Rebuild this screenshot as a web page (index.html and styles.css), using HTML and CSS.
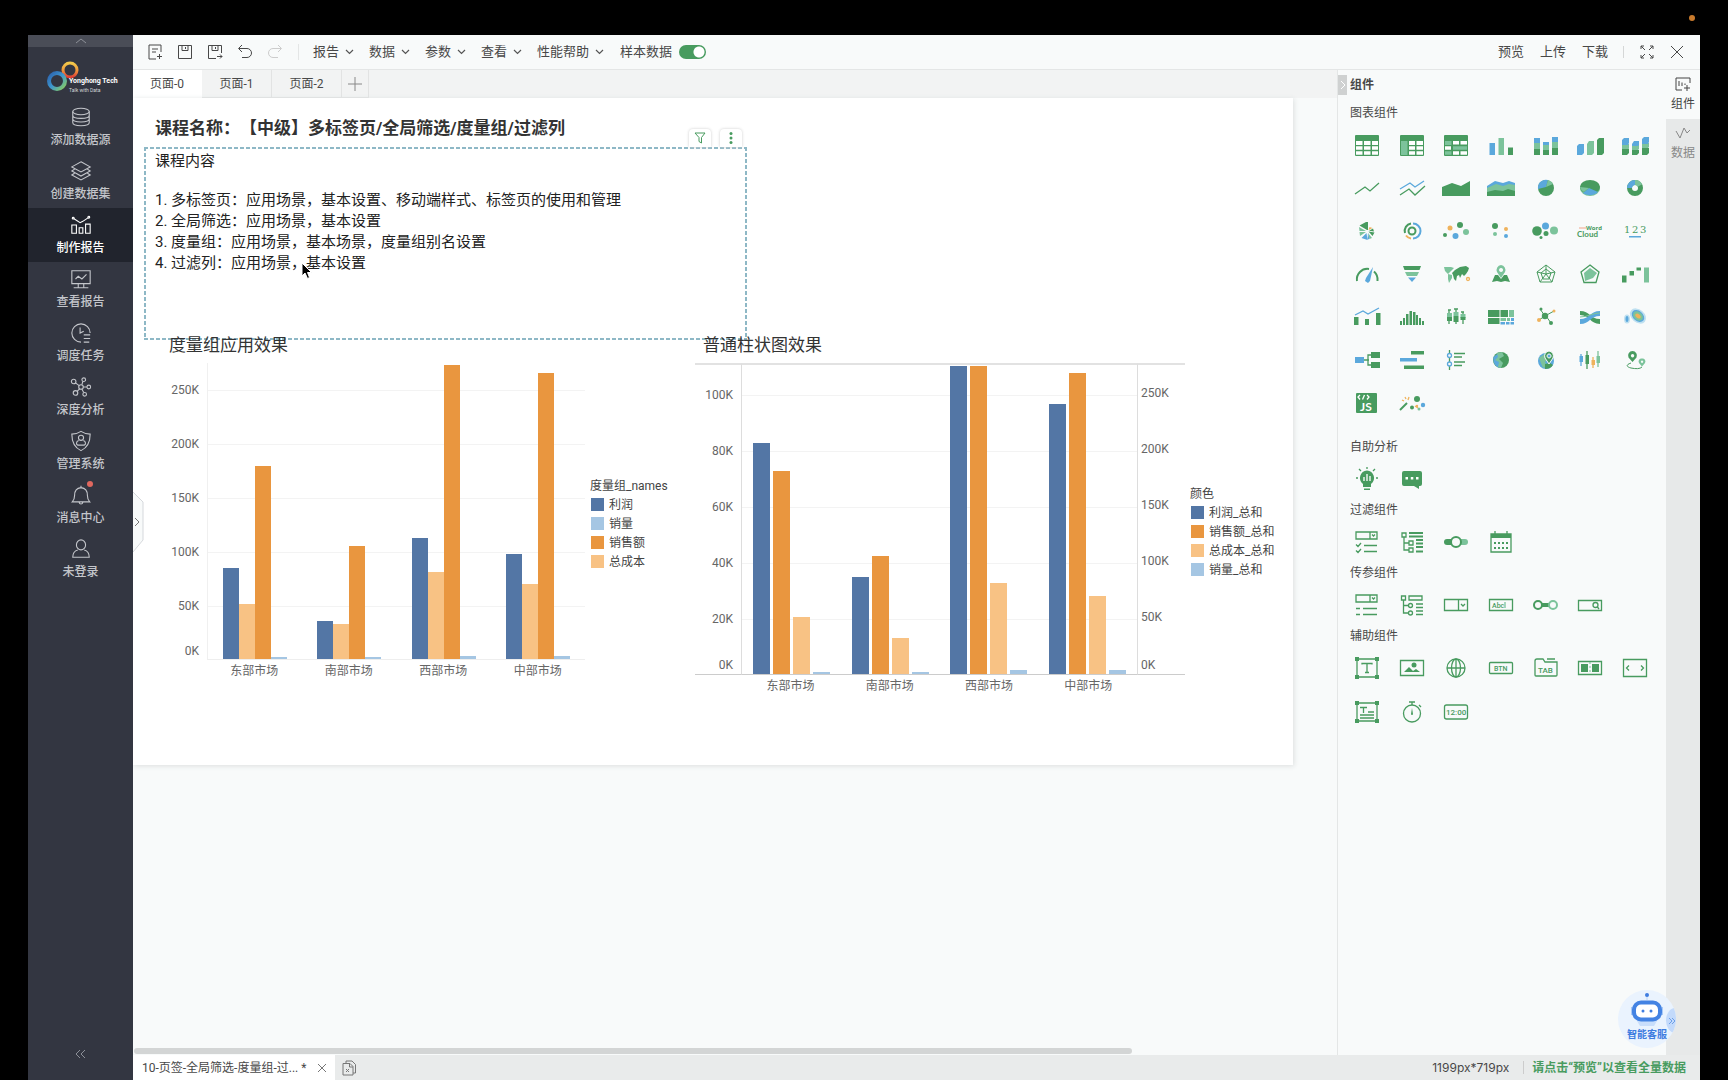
FILE: index.html
```html
<!DOCTYPE html>
<html lang="zh-CN">
<head>
<meta charset="utf-8">
<meta name="viewport" content="width=device-width, initial-scale=1">
<title>制作报告</title>
<link rel="stylesheet" href="styles.css">
</head>
<body>
<span class="status-dot"></span>
<div class="app">
  <nav class="sidebar">
    <button class="side-collapse" aria-label="收起顶部"><svg width="12" height="6" viewBox="0 0 12 6"><path d="M1 5l5-4 5 4"/></svg></button>
    <a class="logo" href="#">
      <svg width="32" height="32" viewBox="0 0 32 32">
        <defs>
          <linearGradient id="lw" x1="0" y1="0" x2="0" y2="1"><stop offset="0" stop-color="#f3c94b"/><stop offset=".5" stop-color="#ee9a3c"/><stop offset="1" stop-color="#df3f35"/></linearGradient>
          <linearGradient id="lc" x1="0" y1="0" x2="1" y2="1"><stop offset="0" stop-color="#2c62ad"/><stop offset=".5" stop-color="#3d97cf"/><stop offset="1" stop-color="#8ccf5c"/></linearGradient>
        </defs>
        <circle cx="23" cy="9" r="7" fill="none" stroke="url(#lw)" stroke-width="3"/>
        <circle cx="10" cy="20" r="8" fill="none" stroke="url(#lc)" stroke-width="4"/>
      </svg>
      <span class="logo-text"><b>Yonghong Tech</b><small>Talk with Data</small></span>
    </a>
    <ul class="side-list">
      <li><a href="#"><svg class="si" viewBox="0 0 24 24"><ellipse cx="12" cy="6" rx="9" ry="3.5"/><path d="M3 6v12c0 2 4 3.500 9 3.500s9-1.500 9-3.500V6M3 10c0 2 4 3.500 9 3.500s9-1.500 9-3.500M3 14c0 2 4 3.500 9 3.500s9-1.500 9-3.500"/></svg><span>添加数据源</span></a></li>
      <li><a href="#"><svg class="si" viewBox="0 0 24 24"><path d="M12 2l10 5.500-10 5.500L2 7.500zM5 10l-3 2 10 5.500 10-5.500-3-2M5 14.500l-3 1.800 10 5.500 10-5.500-3-1.800"/></svg><span>创建数据集</span></a></li>
      <li><a href="#" class="active" aria-current="page"><svg class="si" viewBox="0 0 24 24"><path d="M2 12h5v9H2zM10 15h4v6h-4zM17 11h5v10h-5zM4 5l7 4.500 3-1.500 6-4"/><circle cx="3.500" cy="4.500" r="1"/><circle cx="20.500" cy="3.500" r="1"/></svg><span>制作报告</span></a></li>
      <li><a href="#"><svg class="si" viewBox="0 0 24 24"><path d="M2 3h20v14H2zM9 17v4M15 17v4M4 21.500h16M6 12l3-3 4 3 5-5"/></svg><span>查看报告</span></a></li>
      <li><a href="#"><svg class="si" viewBox="0 0 24 24"><path d="M12 22a10 10 0 1 1 10-10M11 6v6l4-2M15 14h7M15 18h7M15 22h6"/></svg><span>调度任务</span></a></li>
      <li><a href="#"><svg class="si" viewBox="0 0 24 24"><circle cx="12" cy="12" r="2.500"/><circle cx="4" cy="6" r="2.500"/><circle cx="15" cy="4" r="2"/><circle cx="20.500" cy="12" r="2"/><circle cx="6" cy="18.500" r="2.500"/><circle cx="16" cy="20" r="2"/><path d="M6 7.500l4 3M14 6l-1 3.500M14.500 12h4M10.500 14L8 16.500M13 14.500l2 3.500"/></svg><span>深度分析</span></a></li>
      <li><a href="#"><svg class="si" viewBox="0 0 24 24"><path d="M12 1.500c3 2 6 3 10 3 0 8-2 14-10 18C4 18.500 2 12.500 2 4.500c4 0 7-1 10-3z"/><circle cx="12" cy="8.500" r="2.800"/><path d="M9.500 11.500c-3 1-3 4.500-1 5h7c2-.5 2-4-1-5"/></svg><span>管理系统</span></a></li>
      <li><a href="#"><svg class="si" viewBox="0 0 24 24"><path d="M2.500 19.500h19c-2-2-2.500-4-2.500-7 0-5-2-8-7-8.500-5 .5-7 3.500-7 8.500 0 3-.5 5-2.500 7zM12 4V2M10 20c.5 2.500 3.500 2.500 4 0"/></svg><i class="badge"></i><span>消息中心</span></a></li>
      <li><a href="#"><svg class="si" viewBox="0 0 24 24"><ellipse cx="12" cy="7.500" rx="5" ry="5.500"/><path d="M8.500 13C4.500 14 3 17 3 21h18c0-4-1.500-7-5.500-8"/></svg><span>未登录</span></a></li>
    </ul>
    <button class="side-fold" aria-label="折叠"><svg width="12" height="10" viewBox="0 0 12 10"><path d="M5 1L1 5l4 4M10 1L6 5l4 4"/></svg></button>
  </nav>

  <div class="main">
    <header class="toolbar">
      <div class="tools">
        <button aria-label="新建"><svg class="ti" viewBox="0 0 16 16"><path d="M14 8V1H2v14h7M5 5h6M5 8h4M10 12.500h5M12.500 10v5"/></svg></button>
        <button aria-label="保存"><svg class="ti" viewBox="0 0 16 16"><path d="M1.500 1.500h13v13h-13zM5 1.500v5h6v-5M8.500 3v2"/></svg></button>
        <button aria-label="另存为"><svg class="ti" viewBox="0 0 16 16"><path d="M14.500 9V1.500h-13v13H9M5 1.500v5h6v-5M8.500 3v2M10 12.500h5M13 10.500l2 2-2 2"/></svg></button>
        <button aria-label="撤销"><svg class="ti" viewBox="0 0 16 16"><path d="M5 1L1.500 4.500 5 8M2 4.500h8a4.500 4.500 0 0 1 0 9H5"/></svg></button>
        <button aria-label="重做" disabled><svg class="ti" viewBox="0 0 16 16"><path d="M11 1l3.500 3.500L11 8M14 4.500H6a4.500 4.500 0 0 0 0 9h5"/></svg></button>
      </div>
      <div class="menus">
        <button>报告<svg class="caret" viewBox="0 0 9 6"><path d="M1 1l3.500 3.500L8 1"/></svg></button>
        <button>数据<svg class="caret" viewBox="0 0 9 6"><path d="M1 1l3.500 3.500L8 1"/></svg></button>
        <button>参数<svg class="caret" viewBox="0 0 9 6"><path d="M1 1l3.500 3.500L8 1"/></svg></button>
        <button>查看<svg class="caret" viewBox="0 0 9 6"><path d="M1 1l3.500 3.500L8 1"/></svg></button>
        <button>性能帮助<svg class="caret" viewBox="0 0 9 6"><path d="M1 1l3.500 3.500L8 1"/></svg></button>
        <label class="switch">样本数据<input type="checkbox" checked></label>
      </div>
      <div class="actions">
        <button>预览</button><button>上传</button><button>下载</button>
        <i class="sep"></i>
        <button aria-label="全屏"><svg class="ti" viewBox="0 0 16 16"><path d="M2 5V2h3M2 2l4 4M11 2h3v3M14 2l-4 4M2 11v3h3M2 14l4-4M14 11v3h-3M14 14l-4-4"/></svg></button>
        <button aria-label="关闭"><svg class="ti" viewBox="0 0 16 16"><path d="M2 2l12 12M14 2L2 14"/></svg></button>
      </div>
    </header>

    <div class="work">
      <section class="editor">
        <div class="tabs">
          <button class="on">页面-0</button><button>页面-1</button><button>页面-2</button>
          <button class="add" aria-label="添加页面"><svg width="14" height="14" viewBox="0 0 14 14"><path d="M7 0v14M0 7h14"/></svg></button>
        </div>
        <div class="stage">
          <button class="handle" aria-label="展开"><svg width="11" height="62" viewBox="0 0 11 62"><path class="hb" d="M0 1l10 10v38L0 61"/><path class="ha" d="M2 27l4 4-4 4"/></svg></button>
          <div class="artboard">
            <h1>课程名称：【中级】多标签页/全局筛选/度量组/过滤列</h1>
            <article class="note">
              <div class="note-tools">
                <button aria-label="筛选"><svg width="12" height="12" viewBox="0 0 12 12"><path d="M1 1h10L7.500 5.500V11L5 9.500v-4z"/></svg></button>
                <button aria-label="更多"><svg width="4" height="12" viewBox="0 0 4 12"><circle cx="2" cy="1.500" r="1.500"/><circle cx="2" cy="6" r="1.500"/><circle cx="2" cy="10.500" r="1.500"/></svg></button>
              </div>
              <p>课程内容</p>
              <p>1. 多标签页：应用场景，基本设置、移动端样式、标签页的使用和管理<br>2. 全局筛选：应用场景，基本设置<br>3. 度量组：应用场景，基本场景，度量组别名设置<br>4. 过滤列：应用场景，基本设置</p>
              <svg class="cursor" width="12" height="18" viewBox="0 0 12 18"><path d="M1 1v13l3-3 2.500 5.500 2-1L6.500 10.500H10.500z"/></svg>
            </article>
            <div class="charts">
              <section class="chart first">
                <h2>度量组应用效果</h2>
                <div class="chart-body">
                  <div class="axis left"><span>250K</span><span>200K</span><span>150K</span><span>100K</span><span>50K</span><span>0K</span></div>
                  <div class="plot">
                    <div class="group"><i class="c1" style="height:91px"></i><i class="c3" style="height:55px"></i><i class="c2" style="height:193px"></i><i class="c4" style="height:2px"></i></div>
                    <div class="group"><i class="c1" style="height:38px"></i><i class="c3" style="height:35px"></i><i class="c2" style="height:113px"></i><i class="c4" style="height:2px"></i></div>
                    <div class="group"><i class="c1" style="height:121px"></i><i class="c3" style="height:87px"></i><i class="c2" style="height:294px"></i><i class="c4" style="height:3px"></i></div>
                    <div class="group"><i class="c1" style="height:105px"></i><i class="c3" style="height:75px"></i><i class="c2" style="height:286px"></i><i class="c4" style="height:3px"></i></div>
                  </div>
                  <div class="cats"><span>东部市场</span><span>南部市场</span><span>西部市场</span><span>中部市场</span></div>
                  <div class="legend"><b>度量组_names</b><ul><li><i class="c1"></i>利润</li><li><i class="c4"></i>销量</li><li><i class="c2"></i>销售额</li><li><i class="c3"></i>总成本</li></ul></div>
                </div>
              </section>
              <section class="chart second">
                <h2>普通柱状图效果</h2>
                <div class="chart-body">
                  <div class="axis left"><span>100K</span><span>80K</span><span>60K</span><span>40K</span><span>20K</span><span>0K</span></div>
                  <div class="plot">
                    <div class="group"><i class="c1" style="height:231px"></i><i class="c2" style="height:203px"></i><i class="c3" style="height:57px"></i><i class="c4" style="height:2px"></i></div>
                    <div class="group"><i class="c1" style="height:97px"></i><i class="c2" style="height:118px"></i><i class="c3" style="height:36px"></i><i class="c4" style="height:2px"></i></div>
                    <div class="group"><i class="c1" style="height:308px"></i><i class="c2" style="height:308px"></i><i class="c3" style="height:91px"></i><i class="c4" style="height:4px"></i></div>
                    <div class="group"><i class="c1" style="height:270px"></i><i class="c2" style="height:301px"></i><i class="c3" style="height:78px"></i><i class="c4" style="height:4px"></i></div>
                  </div>
                  <div class="axis right"><span>250K</span><span>200K</span><span>150K</span><span>100K</span><span>50K</span><span>0K</span></div>
                  <div class="cats"><span>东部市场</span><span>南部市场</span><span>西部市场</span><span>中部市场</span></div>
                  <div class="legend"><b>颜色</b><ul><li><i class="c1"></i>利润_总和</li><li><i class="c2"></i>销售额_总和</li><li><i class="c3"></i>总成本_总和</li><li><i class="c4"></i>销量_总和</li></ul></div>
                </div>
              </section>
            </div>
          </div>
          <div class="scroll"><i></i></div>
        </div>
      </section>

      <aside class="panel">
        <div class="panel-head"><button aria-label="收起面板"><svg width="6" height="10" viewBox="0 0 6 10"><path d="M1 1l4 4-4 4"/></svg></button><h2>组件</h2></div>
        <h3>图表组件</h3>
        <div class="icons charts-set">
          <button title="普通表"><svg viewBox="0 0 30 24"><rect class="g" x="3" y="2" width="24" height="21" rx="1"/><path class="w" d="M4 8h6.500v4H4zM12 8h6.500v4H12zM20 8h6v4h-6zM4 13.300h6.500v3.500H4zM12 13.300h6.500v3.500H12zM20 13.300h6v3.500h-6zM4 18.200h6.500v3.500H4zM12 18.200h6.500v3.500H12zM20 18.200h6v3.500h-6z"/></svg></button>
          <button title="交叉表"><svg viewBox="0 0 30 24"><rect class="g" x="3" y="2" width="24" height="21" rx="1"/><path class="m" d="M4 8h6.500v14H4z"/><path class="w" d="M12 8h6v4h-6zM19.500 8h6.500v4h-6.500zM12 13.300h6v3.500h-6zM19.500 13.300h6.500v3.500h-6.500zM12 18.200h6v3.500h-6zM19.500 18.200h6.500v3.500h-6.500z"/></svg></button>
          <button title="自由表"><svg viewBox="0 0 30 24"><rect class="g" x="3" y="2" width="24" height="21" rx="1"/><path class="m" d="M4 8h6.500v4H4zM12 13.300h14v3.500H12zM4 18.200h6.500v3.500H4z"/><path class="w" d="M12 8h6v3.500h-6zM19.500 8h6.500v3.500h-6.500zM4 13.300h6v3.500H4zM12 18.200h6v3.500h-6zM19.500 18.200h6.500v3.500h-6.500z"/></svg></button>
          <button title="柱状图"><svg viewBox="0 0 30 24"><path class="b" d="M3.500 10H9v12H3.500z"/><path class="m" d="M12.500 5H18v17h-5.500z"/><path class="g" d="M22 14.500h5V22h-5z"/></svg></button>
          <button title="堆积柱状图"><svg viewBox="0 0 30 24"><path class="g" d="M3 16h6v6H3zM12 17h6v5h-6zM21 15h6v7h-6z"/><path class="m" d="M3 10h6v6H3zM12 12h6v5h-6zM21 9h6v6h-6z"/><path class="b" d="M3 5h6v5H3zM12 9h6v3h-6zM21 4h6v5h-6z"/></svg></button>
          <button title="3D柱状图"><svg viewBox="0 0 30 24"><path class="b" d="M2 13l2-2h5v9l-2 2H2z"/><path class="m" d="M12 11l2-3h5v12l-2 2h-5z"/><path class="g" d="M22 7l2-2h5v15l-2 2h-5z"/></svg></button>
          <button title="3D堆积柱状图"><svg viewBox="0 0 30 24"><path class="g" d="M2 16h6l1-1v5l-2 2H2zM12 17h7v3l-2 2h-5zM22 15h7v5l-2 2h-5z"/><path class="m" d="M2 11h7v4l-1 1H2zM12 12h7v4l-1 1h-6zM22 10h7v4l-1 1h-6z"/><path class="b" d="M2 7l2-2h5v5l-1 2H2zM12 11l2-3h5v4l-1 1h-6zM22 6l2-2h5v5l-1 2h-6z"/></svg></button>

          <button title="线图"><svg viewBox="0 0 30 24"><path class="sg" d="M3 18l10-7 5 4 9-8"/></svg></button>
          <button title="多线图"><svg viewBox="0 0 30 24"><path class="sb" d="M3 13l10-6 5 4 9-6"/><path class="sg" d="M3 19l9-6 6 6 10-9"/></svg></button>
          <button title="面积图"><svg viewBox="0 0 30 24"><path class="g" d="M1 11l10-4 9 3 9-5v15H1z"/></svg></button>
          <button title="堆积面积图"><svg viewBox="0 0 30 24"><path class="b" d="M1 10l8-5 8 2 6-2 6 2v10H1z"/><path class="m" d="M1 12l9-4 7 2 6-2 6 1v10H1z"/><path class="g" d="M1 16l8-2 8 1 5-2 7 2v5H1z"/></svg></button>
          <button title="饼图"><svg viewBox="0 0 30 24"><circle class="g" cx="15" cy="12" r="8"/><path class="b" d="M7 13a8 8 0 0 1 10-9l-2 7z"/><path class="m" d="M17 4a8 8 0 0 1 5 4l-7 3z"/></svg></button>
          <button title="3D饼图"><svg viewBox="0 0 30 24"><ellipse class="m" cx="15" cy="12.500" rx="10" ry="7.500"/><ellipse class="g" cx="15" cy="11" rx="10" ry="7"/><path class="b" d="M8 17l6-5 9 4c-4 4-11 4-15 1z"/><path class="m" d="M5 11c1 3 2 4 4 5l5-4z"/></svg></button>
          <button title="环形图"><svg viewBox="0 0 30 24"><circle class="sg thick" cx="15" cy="12" r="5.500"/><path class="sb thick" d="M9.500 12a5.500 5.500 0 0 1 5.500-5.500"/><path class="sm thick" d="M15 6.500a5.500 5.500 0 0 1 5 3"/></svg></button>

          <button title="玫瑰图"><svg viewBox="0 0 30 24"><path class="g" d="M15 11L7.500 6.500 14 3h2v8zM16.500 12.500l6 1-2 3.500z"/><path class="m" d="M14 12H7.500L7 8zM14 13l-6 4-.5-4zM16 14l4 5-2.500 1z"/><path class="b" d="M14.500 14l-5 5 6 2zM16 14l1.500 6-2 .5z"/><path class="o" d="M16.500 11l1-3 3 1z"/><path class="g" d="M17 11.700l4-2.200 1 3z"/></svg></button>
          <button title="多层饼图"><svg viewBox="0 0 30 24"><circle class="sg w-2" cx="15" cy="12" r="3.500"/><path class="sg w-2" d="M8 14a7.500 7.500 0 0 1 6-9.500"/><path class="sb w-2" d="M16 4.500a7.500 7.500 0 0 1 0 15"/><path class="so w-2" d="M9 16.500a7.500 7.500 0 0 0 5 3"/></svg></button>
          <button title="散点图"><svg viewBox="0 0 30 24"><circle class="g" cx="19" cy="6" r="3"/><circle class="o" cx="9" cy="9" r="2.500"/><circle class="m" cx="25" cy="13" r="3"/><circle class="b" cx="14.500" cy="17" r="3"/><circle class="g" cx="4" cy="16" r="2"/></svg></button>
          <button title="打点图"><svg viewBox="0 0 30 24"><circle class="g" cx="9" cy="7" r="3"/><circle class="o" cx="20" cy="10" r="2"/><circle class="m" cx="9" cy="15" r="2"/><circle class="b" cx="20" cy="17" r="2"/></svg></button>
          <button title="气泡图"><svg viewBox="0 0 30 24"><circle class="g" cx="6" cy="12" r="4.800"/><circle class="b" cx="14.500" cy="7" r="3.500"/><circle class="m" cx="23" cy="11.500" r="4"/><circle class="g" cx="15" cy="14.500" r="2.500"/><circle class="g" cx="10" cy="18.500" r="1.500"/></svg></button>
          <button title="词云"><svg viewBox="0 0 30 24"><path class="r" d="M4 8.500h7v1H4z"/><text class="g wt" x="11" y="11">Word</text><text class="g wc" x="2" y="18">Cloud</text></svg></button>
          <button title="指标卡"><svg viewBox="0 0 30 24"><text class="g num" x="4 12 20" y="14">123</text><path class="b" d="M9 17h12v1.500H9z"/></svg></button>

          <button title="仪表"><svg viewBox="0 0 30 24"><path class="sg w-2" d="M5 19A10.500 10.500 0 0 1 17 7M22 9.500a11 11 0 0 1 3.500 9.500"/><path class="b" d="M21 5l-3 14-2 2-3-2 1-3z"/></svg></button>
          <button title="漏斗图"><svg viewBox="0 0 30 24"><path class="g" d="M6 4h18l-1.500 4h-15z"/><path class="m" d="M8 10h14l-2 4H10z"/><path class="b" d="M11 15.500h8L15 20z"/></svg></button>
          <button title="地图"><svg viewBox="0 0 30 24"><path class="m" d="M3 5h7l3 1-3 3-3 3-3-3zM7 12l4 1 0 3-3 5-1-4z"/><path class="g" d="M14 8l5-3 6-1 3 2-1 3-2 3-2 2-2-2-2 4-1-3-2 1-1 5-2-2-1-4-1-2z"/><circle class="so" cx="27" cy="17" r="1.500"/></svg></button>
          <button title="GIS地图"><svg viewBox="0 0 30 24"><path class="g" d="M9 13l3 0 3 4 3-4h3l3 7-5-1-4 1-4-1-5 1z"/><path class="m" fill-rule="evenodd" d="M15 3a5 5 0 0 1 4 7l-4 6-4-6a5 5 0 0 1 4-7zm0 3a2 2 0 1 0 .1 0z"/></svg></button>
          <button title="雷达图"><svg viewBox="0 0 30 24"><path class="sg w-1" d="M15 3l9 7-3 10H9L6 10zM15 7l5 4-2 6h-6l-2-6zM15 3v9L6 10M15 12l9-2M15 12l6 8M15 12l-6 8"/></svg></button>
          <button title="填充雷达图"><svg viewBox="0 0 30 24"><path class="sg" d="M15 3l9 7-3 10.500H9L6 10z"/><path class="m" d="M15 6l7 5-4 5-8 3-1-8z"/></svg></button>
          <button title="瀑布图"><svg viewBox="0 0 30 24"><path class="g" d="M2 13.500h4.500v7H2zM9.500 9H14v4.500H9.500zM16.500 5.500H21v3h-4.500z"/><path class="m" d="M24 5.500h5v15h-5z"/></svg></button>

          <button title="组合图"><svg viewBox="0 0 30 24"><path class="sb" d="M3 10l8-4 5 3 11-6"/><path class="g" d="M2 12h4.500v8H2zM13 14h4v6h-4zM24 8h4.500v12H24z"/></svg></button>
          <button title="直方图"><svg viewBox="0 0 30 24"><path class="g" d="M3 16h2v4H3zM6 13h2v7H6zM9 9h2.500v11H9zM12.500 6H15v14h-2.500zM16 7h2.500v13H16zM19 10h2v10h-2zM22 13h2v7h-2zM25 16h2v4h-2z"/></svg></button>
          <button title="箱线图"><svg viewBox="0 0 30 24"><path class="sg" d="M8 5v14M15 4v15M22 7v12M7 5h3M13 4h4M20 7h3"/><path class="m" d="M6 8h5v4H6zM12.500 7h5v4h-5zM19.500 9h5v4h-5z"/><path class="g" d="M6 12h5v4H6zM12.500 11h5v6h-5zM19.500 12h5v3h-5z"/></svg></button>
          <button title="树图"><svg viewBox="0 0 30 24"><path class="g" d="M2 5h11.500v7H2zM2 13h11.500v6H2zM14.500 5H22v7h-7.500z"/><path class="m" d="M23 5h5v7h-5zM14.500 13H20v3h-5.500zM21 13h3v3h-3z"/><path class="b" d="M14.500 17H19v2.500h-4.500zM20 17h3.500v2.500H20zM24.500 17H28v2.500h-3.500zM25 13h3v3h-3z"/></svg></button>
          <button title="关系图"><svg viewBox="0 0 30 24"><path class="sg w-1" d="M9 4l5 7 9-5M14 11l-6 4M15 11l5 7"/><circle class="g" cx="14" cy="11" r="3.200"/><circle class="g" cx="10" cy="4" r="1.500"/><circle class="o" cx="23" cy="6" r="1.500"/><circle class="o" cx="8" cy="15" r="2"/><circle class="g" cx="20" cy="18" r="2"/></svg></button>
          <button title="桑基图"><svg viewBox="0 0 30 24"><path class="g" d="M5 6c10 0 10 8 20 8v5C15 19 15 10 5 10z"/><path class="b" d="M25 6C15 6 15 14 5 14v5c10 0 10-8 20-8z"/><path class="sm w-1" d="M5 12c8 0 12-4 20-4"/></svg></button>
          <button title="热力图"><svg viewBox="0 0 30 24"><g transform="rotate(40 18 11)"><ellipse cx="18" cy="11" rx="9" ry="6.500" fill="#bfe0f0"/><ellipse class="b" cx="18" cy="11" rx="7" ry="5"/><ellipse class="m" cx="18" cy="11" rx="5.500" ry="4"/><ellipse class="o" cx="18" cy="11" rx="3" ry="2"/></g><ellipse cx="7" cy="14" rx="3" ry="4.500" fill="#bfe0f0"/><ellipse class="b" cx="7" cy="14" rx="1.500" ry="3"/></svg></button>

          <button title="组织图"><svg viewBox="0 0 30 24"><path class="sg" d="M10 12h7M20 7h-4v10h4"/><path class="b" d="M3 9h9v6H3z"/><path class="g" d="M19 4h9v6h-9zM19 14h9v6h-9z"/></svg></button>
          <button title="甘特图"><svg viewBox="0 0 30 24"><path class="g" d="M14 3h13v3.500H14zM7 17.500h20V21H7z"/><path class="b" d="M3 10h17v3.500H3z"/></svg></button>
          <button title="时间轴"><svg viewBox="0 0 30 24"><path class="sg" d="M8.500 2v20M13 5.500h11M13 9h8M13 14h11M13 17.500h8"/><circle cx="8.500" cy="7.500" r="2" class="sb wf"/><circle cx="8.500" cy="16" r="2" class="sb wf"/></svg></button>
          <button title="3D地球"><svg viewBox="0 0 30 24"><circle class="g" cx="15" cy="12" r="8"/><path class="b" d="M7.500 9l5-4 1 4-3 3 5 3-1 5c-5-1-8-5-7-11z"/><path class="m" d="M11 5l5-1 2 4-5 3 4 4-2 5-3-1 1-5-4-2 3-3z"/></svg></button>
          <button title="3D GIS"><svg viewBox="0 0 30 24"><circle class="b" cx="15" cy="13" r="8"/><path class="m" d="M8 10l7-5 2 5-3 4 2 4-4 2z"/><path class="g" d="M14 16l5-1 3 2c-2 3-5 4-8 4z"/><path class="g w2" fill-rule="evenodd" d="M18 3a5 5 0 0 1 4 7l-4 6-4-6a5 5 0 0 1 4-7zm0 3a2 2 0 1 0 .1 0z"/></svg></button>
          <button title="K线图"><svg viewBox="0 0 30 24"><path class="sb" d="M6 6v12"/><path class="sg" d="M12 3v18"/><path class="so" d="M18 9v11"/><path class="sm" d="M23 3v16"/><path class="b" d="M4.500 8h3.500v6H4.500z"/><path class="g" d="M10.500 7H14v9h-3.500z"/><path class="o" d="M16.500 12H20v5h-3.500z"/><path class="m" d="M21.500 8H25v7h-3.500z"/></svg></button>
          <button title="迁徙图"><svg viewBox="0 0 30 24"><path class="g" fill-rule="evenodd" d="M12.500 3a4.500 4.500 0 0 1 4 6.500l-4 4.500-4-4.500a4.500 4.500 0 0 1 4-6.500zm0 3a1.700 1.700 0 1 0 .1 0z"/><path class="m" fill-rule="evenodd" d="M22 10.500a3 3 0 0 1 3 4.500l-3 3.500-3-3.500a3 3 0 0 1 3-4.500zm0 2a1.200 1.200 0 1 0 .1 0z"/><path class="sg w-1" d="M11 15c-6 2-4 4 0 5 5 1 9 1 11-1"/></svg></button>

          <button title="自定义JS"><svg viewBox="0 0 30 24"><rect class="g" x="4" y="2" width="21" height="20" rx="1"/><path class="sw" d="M8 4L6 6l2 2.500M15 4l2 2-2 2.500M12.500 4l-2 4.500"/><text class="w js" x="8" y="20">JS</text></svg></button>
          <button title="智能图表"><svg viewBox="0 0 30 24"><path class="sg w-2" d="M3 19l7-7"/><path class="so" d="M8 6l1 2M5 9l2 1M12 6l-1 3M18 15l3 2"/><circle class="g" cx="20" cy="8" r="3"/><circle class="b" cx="26" cy="14" r="2.200"/><circle class="g" cx="15" cy="16.500" r="2"/><circle class="o" cx="20" cy="15" r="1.200"/><circle class="m" cx="22" cy="18" r="1.500"/></svg></button>
        </div>
        <h3>自助分析</h3>
        <div class="icons">
          <button title="智能洞察"><svg viewBox="0 0 30 24"><path class="g" d="M15 3.500a7.500 7.500 0 0 1 4 13.500v3h-8v-3a7.500 7.500 0 0 1 4-13.500zM12 21.500h6V23h-6z"/><path class="sw" d="M12 14v-4M15 14V7M18 14V9"/><path class="sg" d="M15 0v2M7 2l2 2M23 2l-2 2M4 11h2M24 11h2"/></svg></button>
          <button title="对话分析"><svg viewBox="0 0 30 24"><path class="g" d="M7 4h16a2 2 0 0 1 2 2v11a2 2 0 0 1-2 2h-1v3l-5-3H7a2 2 0 0 1-2-2V6a2 2 0 0 1 2-2z"/><path class="w" d="M8.500 10h2.500v2.500H8.500zM13.800 10h2.500v2.500h-2.500zM19 10h2.500v2.500H19z"/></svg></button>
        </div>
        <h3>过滤组件</h3>
        <div class="icons">
          <button title="列表过滤"><svg viewBox="0 0 30 24"><path class="sg" d="M4 2h21v7H4zM18 2v7M20 4.500l1.500 1.500 1.500-1.500M4 14.500l2 2 3-3.500M4 20.500l2 2 3-3.500M12 15.500h13M12 21.500h13"/></svg></button>
          <button title="树状过滤"><svg viewBox="0 0 30 24"><path class="sg" d="M5 3h4v4H5zM7 7v13h5M7 13h5M12 11h4v4h-4zM12 18h4v4h-4z"/><path class="sg w-2" d="M12 3h14M12 6.500h14M19 10h7M19 13.500h7M19 17h7M19 21.500h7"/></svg></button>
          <button title="范围过滤"><svg viewBox="0 0 30 24"><rect class="g" x="3" y="9" width="14" height="6" rx="3"/><rect class="m" x="15" y="9" width="12" height="6" rx="3"/><circle class="sg wf w-2" cx="15" cy="12" r="5"/></svg></button>
          <button title="日期过滤"><svg viewBox="0 0 30 24"><path class="sg" d="M5 4h20v18H5zM9 1v4M21 1v4"/><path class="g" d="M5 4h20v4H5z"/><path class="sg w-2 dots" d="M8 13h14M8 18h14"/></svg></button>
        </div>
        <h3>传参组件</h3>
        <div class="icons">
          <button title="列表参数"><svg viewBox="0 0 30 24"><path class="sg" d="M4 2h21v7H4zM18 2v7M20 4.500l1.500 1.500 1.500-1.500M4 15.500h4M4 21.500h4M11 15.500h14M11 21.500h14"/></svg></button>
          <button title="树状参数"><svg viewBox="0 0 30 24"><path class="sg" d="M4.500 3h4v4h-4zM6.500 7v13h5M6.500 12.500h5M12 3h13v4H12zM19 11h7M19 14.500h7M19 18h7M19 21.500h7"/><circle class="sg wf" cx="13.500" cy="12.500" r="2"/><circle class="sg wf" cx="13.500" cy="20" r="2"/></svg></button>
          <button title="下拉参数"><svg viewBox="0 0 30 24"><path class="sg" d="M3.500 6.500h23v11h-23zM17.500 6.500v11M20 11l2 2 2-2"/></svg></button>
          <button title="文本参数"><svg viewBox="0 0 30 24"><path class="sg" d="M3.500 6.500h23v11h-23z"/><path class="sm" d="M19 9v6"/><text class="g tiny" x="6" y="14.500">Abc</text></svg></button>
          <button title="滑块参数"><svg viewBox="0 0 30 24"><path class="g" d="M9 10h12v4H9z"/><circle class="sg wf w-2" cx="7" cy="12" r="4"/><circle class="sm wf w-2" cx="22" cy="12" r="4"/></svg></button>
          <button title="搜索参数"><svg viewBox="0 0 30 24"><path class="sg" d="M3.500 7.500h23v10h-23zM22 13.500l2 2.500"/><circle class="sg" cx="20.500" cy="12" r="2.500"/></svg></button>
        </div>
        <h3>辅助组件</h3>
        <div class="icons">
          <button title="文本"><svg viewBox="0 0 30 24"><path class="sg" d="M5 3h20v18H5zM10 8.500V7.500h10v1M15 7.500v9M13 16.500h4"/><path class="g" d="M3 1h4v4H3zM23 1h4v4h-4zM3 19h4v4H3zM23 19h4v4h-4z"/></svg></button>
          <button title="图片"><svg viewBox="0 0 30 24"><path class="sg" d="M3.500 4.500h23v15h-23z"/><path class="g" d="M7 16l5-5 4 4 3-2 4 3z"/><circle class="g" cx="17" cy="9" r="2.500"/></svg></button>
          <button title="网页"><svg viewBox="0 0 30 24"><circle class="sg" cx="15" cy="12" r="9"/><ellipse class="sg" cx="15" cy="12" rx="4.500" ry="9"/><path class="sg" d="M6 12h18M15 3v18"/></svg></button>
          <button title="按钮"><svg viewBox="0 0 30 24"><rect class="sg" x="3.500" y="6.500" width="23" height="11" rx="1"/><text class="g tiny" x="8" y="14.500">BTN</text></svg></button>
          <button title="选项卡"><svg viewBox="0 0 30 24"><path class="sg" d="M4 19V5a2 2 0 0 1 2-2h6l2 3h12v13a1 1 0 0 1-1 1H5a1 1 0 0 1-1-1zM16 3h8"/><text class="g tab" x="7" y="16.500">TAB</text></svg></button>
          <button title="容器"><svg viewBox="0 0 30 24"><path class="sg" d="M3.500 5.500h23v13h-23z"/><path class="g" d="M6 8h7v8H6zM17 8h7v8h-7z"/><path class="sm w-1 dots" d="M15 6v12"/></svg></button>
          <button title="轮播"><svg viewBox="0 0 30 24"><path class="sg" d="M3.500 3.500h23v17h-23zM9 9.500L6.500 12 9 14.500M21 9.500l2.500 2.500-2.500 2.500"/></svg></button>
          <button title="富文本"><svg viewBox="0 0 30 24"><path class="sg" d="M5 3h20v18H5zM8 7.500h7M11.500 7.500V13M16 12h6M8 15h14M8 18h14"/><path class="g" d="M3 1h4v4H3zM23 1h4v4h-4zM3 19h4v4H3zM23 19h4v4h-4z"/></svg></button>
          <button title="计时器"><svg viewBox="0 0 30 24"><circle class="sg" cx="15" cy="13.500" r="8.500"/><path class="sg" d="M12 2h6M15 2v3M22 5l2 2"/><path class="g" d="M15 8l1 6a1 1 0 1 1-2 0z"/></svg></button>
          <button title="时钟"><svg viewBox="0 0 30 24"><rect class="sg" x="3.500" y="5" width="23" height="14" rx="2"/><text class="g clk" x="5" y="15">12:00</text></svg></button>
        </div>
      </aside>

      <div class="rail">
        <button class="on"><svg class="ti" viewBox="0 0 16 16"><path d="M15 7V2H1v12h6M4 5v5M7 6.500V10M10 7.500V9M9 12h6M12 9v6"/></svg>组件</button>
        <button><svg class="ti" viewBox="0 0 16 16"><path d="M1 6l4 7 4-10 3 5 3-3"/></svg>数据</button>
      </div>
    </div>

    <footer class="status">
      <div class="file"><span>10-页签-全局筛选-度量组-过... *</span><button aria-label="关闭文件"><svg width="8" height="8" viewBox="0 0 8 8"><path d="M0 0l8 8M8 0L0 8"/></svg></button></div>
      <button class="files" aria-label="关闭全部"><svg class="ti" viewBox="0 0 16 16"><path d="M5 3.500V1h6l3.500 3.500V13H12M2 3.500h7l3 3V15H2zM8.500 3.500V7H12M5 9l3 3M8 9l-3 3"/></svg></button>
      <span class="size">1199px*719px</span>
      <span class="hint">请点击“预览”以查看全量数据</span>
    </footer>
  </div>

  <button class="robot">
    <svg width="58" height="38" viewBox="0 0 58 38"><path d="M19 31h20l-3 5H22z" fill="#c9defb"/><path d="M29 5v5" stroke="#b8d2f7"/><circle cx="29" cy="5" r="2" fill="#3f7de0"/><path d="M15 17h-2v8h2M43 17h2v8h-2" fill="#a9c9f6"/><rect x="16" y="12.500" width="26" height="17" rx="7" fill="#fff" stroke="#4483e3" stroke-width="4"/><circle cx="25" cy="21" r="1.500" fill="#3f7de0"/><circle cx="33" cy="21" r="1.500" fill="#3f7de0"/></svg>
    <span>智能客服</span>
    <i><svg width="6" height="6" viewBox="0 0 6 6"><path d="M0 0l3 3-3 3M3 0l3 3-3 3"/></svg></i>
  </button>
</div>
</body>
</html>
```
FILE: styles.css
```css
:root {
  --green: #489b5f;
  --mid: #7cc39b;
  --blue: #5ba8dc;
  --amber: #efb25c;
  --paper: #f8fafa;
  --line: #e4e6e6;
  --text: #484848;
}
* { box-sizing: border-box; }
body {
  margin: 0;
  min-height: 100vh;
  padding: 35px 28px 0;
  display: flex;
  background: #000;
  color: var(--text);
  font: 12px/18px Roboto, "Noto Sans CJK SC", sans-serif;
  text-spacing-trim: space-all;
}
button { margin: 0; padding: 0; border: 0; background: none; color: inherit; font: inherit; cursor: pointer; }
button, a { display: flex; align-items: center; }
a { color: inherit; text-decoration: none; }
ul { margin: 0; padding: 0; list-style: none; }
h1, h2, h3, p { margin: 0; }
svg { display: block; flex: none; }
.status-dot { position: absolute; top: 15px; right: 33px; width: 6px; height: 6px; border-radius: 50%; background: #c87a2c; }
.app { position: relative; flex: 1; display: flex; min-width: 0; }

/* Sidebar */
.sidebar { position: relative; z-index: 1; width: 105px; flex: none; display: flex; flex-direction: column; background: #333641; color: #c4c6cb; }
.side-collapse { justify-content: center; height: 12px; background: #4a4d57; }
.side-collapse path, .side-fold path { fill: none; stroke: #8d9098; }
.logo { height: 53px; padding: 14px 0 0 19px; align-items: flex-start; }
.logo-text { display: flex; flex-direction: column; margin: 16px 0 0 -10px; line-height: 8px; color: #fff; }
.logo-text b { font: 700 7px/9px Roboto, sans-serif; white-space: nowrap; }
.logo-text small { font-size: 5px; color: #d5d6da; }
.side-list a { position: relative; height: 54px; flex-direction: column; gap: 2px; padding-top: 5px; font-weight: 500; }
.side-list .active { background: #21242d; color: #fff; }
.si { width: 24px; height: 24px; fill: none; stroke: currentColor; stroke-width: 1.2; padding: 1px; }
.badge { position: absolute; top: 3px; left: 59px; width: 6px; height: 6px; border-radius: 50%; background: #e0685f; }
.side-fold { justify-content: center; height: 24px; margin-top: auto; margin-bottom: 14px; }

/* Toolbar */
.main { flex: 1; min-width: 0; display: flex; flex-direction: column; background: var(--paper); }
.toolbar { height: 35px; display: flex; align-items: center; padding: 0 15px 0 14px; border-bottom: 1px solid var(--line); font-size: 13px; }
.ti { width: 16px; height: 16px; fill: none; stroke: currentColor; }
.tools { display: flex; gap: 14px; padding-right: 15px; border-right: 1px solid var(--line); }
.tools button:disabled { color: #ccc; }
.menus { display: flex; gap: 15px; margin-left: 14px; }
.menus button { gap: 6px; }
.caret { width: 9px; height: 6px; fill: none; stroke: #555; stroke-width: 1.2; }
.switch { display: flex; align-items: center; gap: 7px; margin-left: 1px; }
.switch input { appearance: none; width: 27px; height: 14px; margin: 0; border-radius: 7px; background: radial-gradient(circle at 20px 7px, #fff 5px, var(--green) 6px); }
.actions { display: flex; align-items: center; gap: 16px; margin-left: auto; }
.sep { width: 1px; height: 12px; margin: 0 -1px; background: #d5d7d7; }
.actions button:last-child { margin-left: -2px; }

.work { flex: 1; display: flex; min-height: 0; }
.editor { flex: 1; min-width: 0; display: flex; flex-direction: column; }
.tabs { display: flex; height: 28px; background: #f2f3f3; }
.tabs button { width: 70px; justify-content: center; border-right: 1px solid #e2e3e3; border-bottom: 1px solid #e2e3e3; }
.tabs .on { width: 69px; background: #fff; border-color: #fff; }
.tabs .add { width: 27px; }
.add path { stroke: #888; }
.stage { position: relative; flex: 1; display: flex; flex-direction: column; padding: 0 44px 0 0; }
.handle { position: absolute; left: 0; top: 393px; z-index: 1; }
.hb { fill: #f8fafa; stroke: #d5d8dc; }
.ha { fill: none; stroke: #777; }
.artboard { padding: 18px 0 66px 11px; background: #fff; box-shadow: 1px 1px 5px #dcdfdf; }
h1 { padding-left: 11px; font-size: 17px; line-height: 24px; color: #333; }

/* Selected text block */
.note {
  --dash: #8eb8c6;
  position: relative;
  width: 603px;
  max-width: 100%;
  height: 193px;
  margin-top: 7px;
  padding: 4px 11px;
  color: #222;
  font-size: 15px;
  line-height: 21px;
  white-space: nowrap;
  background:
    repeating-linear-gradient(90deg, var(--dash) 0 4px, transparent 4px 6px) 0 0 / 100% 2px no-repeat,
    repeating-linear-gradient(90deg, var(--dash) 0 4px, transparent 4px 6px) 0 100% / 100% 2px no-repeat,
    repeating-linear-gradient(var(--dash) 0 4px, transparent 4px 6px) 0 0 / 2px 100% no-repeat,
    repeating-linear-gradient(var(--dash) 0 4px, transparent 4px 6px) 100% 0 / 2px 100% no-repeat;
}
.note p + p { margin-top: 18px; }
.note-tools { position: absolute; right: 5px; bottom: 100%; display: flex; gap: 9px; }
.note-tools button { width: 22px; height: 18px; justify-content: center; border-radius: 4px 4px 0 0; box-shadow: 0 0 3px #ccc; background: #fff; }
.note-tools path { fill: none; stroke: var(--green); }
.note-tools circle { fill: var(--green); }
.cursor { position: absolute; left: 157px; top: 115px; }
.cursor path { fill: #000; stroke: #fff; stroke-width: 1; }

/* Charts */
.charts { position: relative; display: grid; grid-template-columns: 551fr 598fr; margin-top: -7px; }
.chart { min-width: 0; }
.chart h2 { padding-left: 25px; font-size: 17px; font-weight: 400; line-height: 24px; color: #333; }
.second h2 { padding-left: 8px; }
.chart-body { display: grid; margin-top: 6px; color: #666; white-space: nowrap; }
.first .chart-body { grid-template-columns: 63px 1fr 110px; grid-template-rows: 297px 24px; }
.second .chart-body { grid-template-columns: 46px 1fr 47px 108px; grid-template-rows: 312px 24px; }
.axis { display: flex; flex-direction: column; }
.axis span { height: var(--step); line-height: var(--step); }
.axis span:last-child { height: 18px; margin-top: auto; line-height: 18px; }
.left { text-align: right; padding-right: 8px; }
.right { padding-left: 3px; }
.first .axis { --step: 54px; }
.second .axis { --step: 56px; padding-top: 2px; }
.second .right { padding-top: 0; }
.second .axis, .second .plot { border-top: 2px solid #e2e2e2; border-bottom: 1px solid #ccc; }
.plot { display: flex; background: linear-gradient(#f3f3f3 1px, transparent 1px) 0 27px / 100% 54px; border-left: 1px solid #f0f0f0; border-bottom: 1px solid #eee; }
.second .plot { background-size: 100% 56px; background-position: 0 30px; border-left: 1px solid #ddd; border-right: 1px solid #ddd; }
.group { flex: 1; display: flex; align-items: flex-end; justify-content: center; }
.group i { width: 16px; }
.second .group { gap: 3px; }
.second .group i { width: 17px; }
.cats { grid-column: 2; grid-row: 2; display: flex; padding-top: 2px; }
.cats span { flex: 1; text-align: center; }
.legend { grid-row: 1; grid-column: -2; padding: 114px 0 0 5px; color: #444; }
.second .legend { padding-top: 122px; }
.legend b { display: block; font-weight: 400; line-height: 18px; }
.legend li { display: flex; align-items: center; gap: 5px; height: 19px; }
.legend li i { width: 13px; height: 13px; margin-left: 1px; }
.c1 { background: #5376a5; }
.c2 { background: #e9963f; }
.c3 { background: #f8c284; }
.c4 { background: #a5c6e3; }
.scroll { margin: auto -44px 1px 1px; height: 6px; }
.scroll i { display: block; width: 83%; height: 6px; border-radius: 3px; background: #d3d5d5; }

/* Component panel */
.panel { width: 329px; flex: none; border-left: 1px solid var(--line); padding: 5px 9px 0 0; }
.panel-head { display: flex; align-items: center; gap: 3px; height: 20px; margin-bottom: 9px; }
.panel-head button { width: 9px; height: 20px; justify-content: center; background: #cfd1d1; }
.panel-head path { fill: none; stroke: #fff; }
.panel-head h2 { font-size: 12px; }
h3 { padding-left: 12px; font-size: 12px; font-weight: 400; line-height: 19px; }
.icons { display: grid; grid-template-columns: repeat(7, 1fr); grid-auto-rows: 44px; padding-left: 7px; }
.icons.charts-set { grid-auto-rows: 43px; padding-bottom: 14px; }
.icons button { justify-content: center; }
.icons svg { width: 30px; height: 24px; overflow: visible; }
.g { fill: var(--green); }
.m { fill: var(--mid); }
.b { fill: var(--blue); }
.o { fill: var(--amber); }
.r { fill: #f0a58a; }
.w { fill: #fff; }
.w2 { stroke: var(--paper); }
.sg, .sm, .sb, .so, .sw { fill: none; stroke-width: 1.3; }
.sg { stroke: var(--green); }
.sm { stroke: var(--mid); }
.sb { stroke: var(--blue); }
.so { stroke: var(--amber); }
.sw { stroke: #fff; }
.w-1 { stroke-width: 1; }
.w-2 { stroke-width: 2; }
.thick { stroke-width: 5; }
.dots { stroke-dasharray: 2 2; }
.wf { fill: var(--paper); }
.wt { font: 700 6px "Open Sans", sans-serif; }
.wc { font: 700 8px Lato, sans-serif; }
.num { font: 10px "DejaVu Serif", serif; }
.js { font: 700 12px Lato, sans-serif; }
.tiny { font: 500 7px Roboto, sans-serif; }
.tab { font: 500 8px Roboto, sans-serif; }
.clk { font: 500 8px Roboto, sans-serif; }

.rail { width: 34px; flex: none; background: #e7e9e9; }
.rail button { width: 100%; height: 49px; flex-direction: column; justify-content: center; gap: 3px; color: #888; }
.rail .on { background: var(--paper); color: #444; }

/* Status bar */
.status { display: flex; align-items: center; height: 25px; background: #e9ebeb; }
.file { display: flex; align-items: center; gap: 12px; height: 25px; padding: 0 9px; background: #fff; }
.status path { fill: none; stroke: #777; }
.files { margin-left: 6px; }
.size { margin-left: auto; padding-right: 14px; border-right: 1px solid #ccc; font: 12px/13px Inter, sans-serif; }
.hint { padding: 0 14px 0 8px; color: var(--green); font-weight: 700; }

/* Floating assistant */
.robot { position: absolute; right: 24px; bottom: 32px; width: 58px; height: 58px; flex-direction: column; border-radius: 50%; background: #eaf3fe; overflow: hidden; color: #3f7de0; font-size: 10px; font-weight: 700; line-height: 13px; }
.robot i { position: absolute; right: -8px; top: 18px; width: 18px; height: 25px; padding: 10px 3px; border-radius: 50%; background: #c3dafb; }
.robot i path { fill: none; stroke: #6d9fe8; }
```
